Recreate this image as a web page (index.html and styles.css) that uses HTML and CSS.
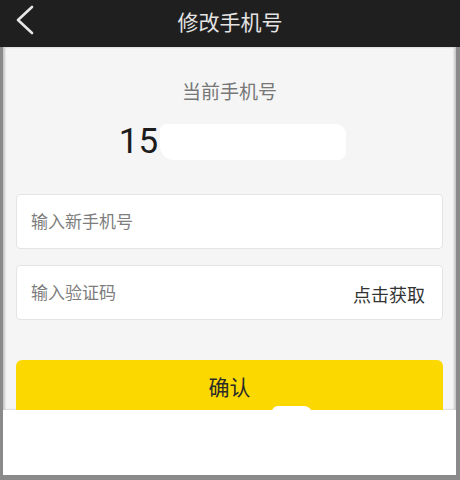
FILE: index.html
```html
<!DOCTYPE html>
<html lang="zh">
<head>
<meta charset="utf-8">
<title>修改手机号</title>
<link rel="stylesheet" href="styles.css">
</head>
<body>
<div class="screen">
  <header class="topbar">
    <svg class="back" width="40" height="40" viewBox="0 0 40 40"><polyline points="32,7 18,20 32,33" fill="none" stroke="#e6e6e6" stroke-width="2.6" stroke-linecap="round" stroke-linejoin="round"/></svg>
    <h1 class="title">修改手机号</h1>
  </header>
  <main class="content">
    <div class="current-label">当前手机号</div>
    <div class="current-number"><span class="digits">15</span><span class="mask"></span></div>
    <div class="field first"><span class="placeholder">输入新手机号</span></div>
    <div class="field"><span class="placeholder">输入验证码</span><span class="get-code">点击获取</span></div>
    <div class="confirm">确认</div>
  </main>
  <div class="blank"></div>
</div>
</body>
</html>
```
FILE: styles.css
```css
html, body {
  margin: 0;
  padding: 0;
  background: #ffffff;
}
body {
  width: 460px;
  height: 480px;
  overflow: hidden;
  font-family: "Noto Sans CJK SC", "Noto Sans", sans-serif;
}
.screen {
  width: 460px;
  height: 480px;
  display: flex;
  flex-direction: column;
}
.topbar {
  height: 47px;
  background: #1f1f1f;
  display: flex;
  align-items: center;
  justify-content: center;
  position: relative;
  flex: none;
}
.back {
  position: absolute;
  left: 0;
  top: 0;
}
.title {
  margin: 0;
  font-size: 21px;
  font-weight: 400;
  color: #e4e4e4;
  line-height: 1;
  margin-top: -4px;
}
.content {
  background: #f5f5f5;
  border-left: 3px solid #8a8a8a;
  border-right: 4px solid #8a8a8a;
  box-shadow: inset 2px 0 2px #c8c8c8, inset -2px 0 2px #c8c8c8;
  padding: 0 13px 0 13px;
  display: flex;
  flex-direction: column;
  flex: none;
  height: 363px;
  overflow: hidden;
}
.current-label {
  margin-top: 30px;
  text-align: center;
  font-size: 19px;
  color: #777777;
  line-height: 28px;
}
.current-number {
  margin-top: 17px;
  height: 40px;
  display: flex;
  justify-content: center;
  align-items: center;
  padding-left: 6px;
  flex: none;
}
.digits {
  font-family: Roboto, "Noto Sans", sans-serif;
  font-size: 35px;
  color: #1c1c1c;
  line-height: 40px;
}
.mask {
  display: inline-block;
  width: 186px;
  height: 36px;
  background: #ffffff;
  border-radius: 6px 10px 8px 14px;
  margin-left: 2px;
}
.field {
  margin-top: 16px;
  height: 53px;
  background: #ffffff;
  border: 1px solid #e4e4e4;
  border-radius: 4px;
  display: flex;
  align-items: center;
  justify-content: space-between;
  padding: 0 17px 0 14px;
  flex: none;
}
.field.first {
  margin-top: 32px;
}
.placeholder {
  font-size: 17px;
  color: #7d7d7d;
  line-height: 1;
  margin-top: -2px;
}
.get-code {
  font-size: 18px;
  color: #333333;
  line-height: 1;
  margin-top: 2px;
}
.confirm {
  margin-top: 40px;
  height: 56px;
  background: #fbd800;
  border-radius: 6px;
  display: flex;
  align-items: flex-start;
  justify-content: center;
  padding-top: 16px;
  box-sizing: border-box;
  font-size: 21px;
  color: #2a2a2a;
  line-height: 1;
  flex: none;
}
.blank {
  flex: 1;
  background: #ffffff;
  border-left: 3px solid #8a8a8a;
  border-right: 4px solid #8a8a8a;
  border-bottom: 5px solid #8a8a8a;
  position: relative;
}
.blank::before {
  content: "";
  position: absolute;
  left: 269px;
  top: -4px;
  width: 40px;
  height: 8px;
  background: #ffffff;
  border-radius: 10px 14px 0 0;
}
```
